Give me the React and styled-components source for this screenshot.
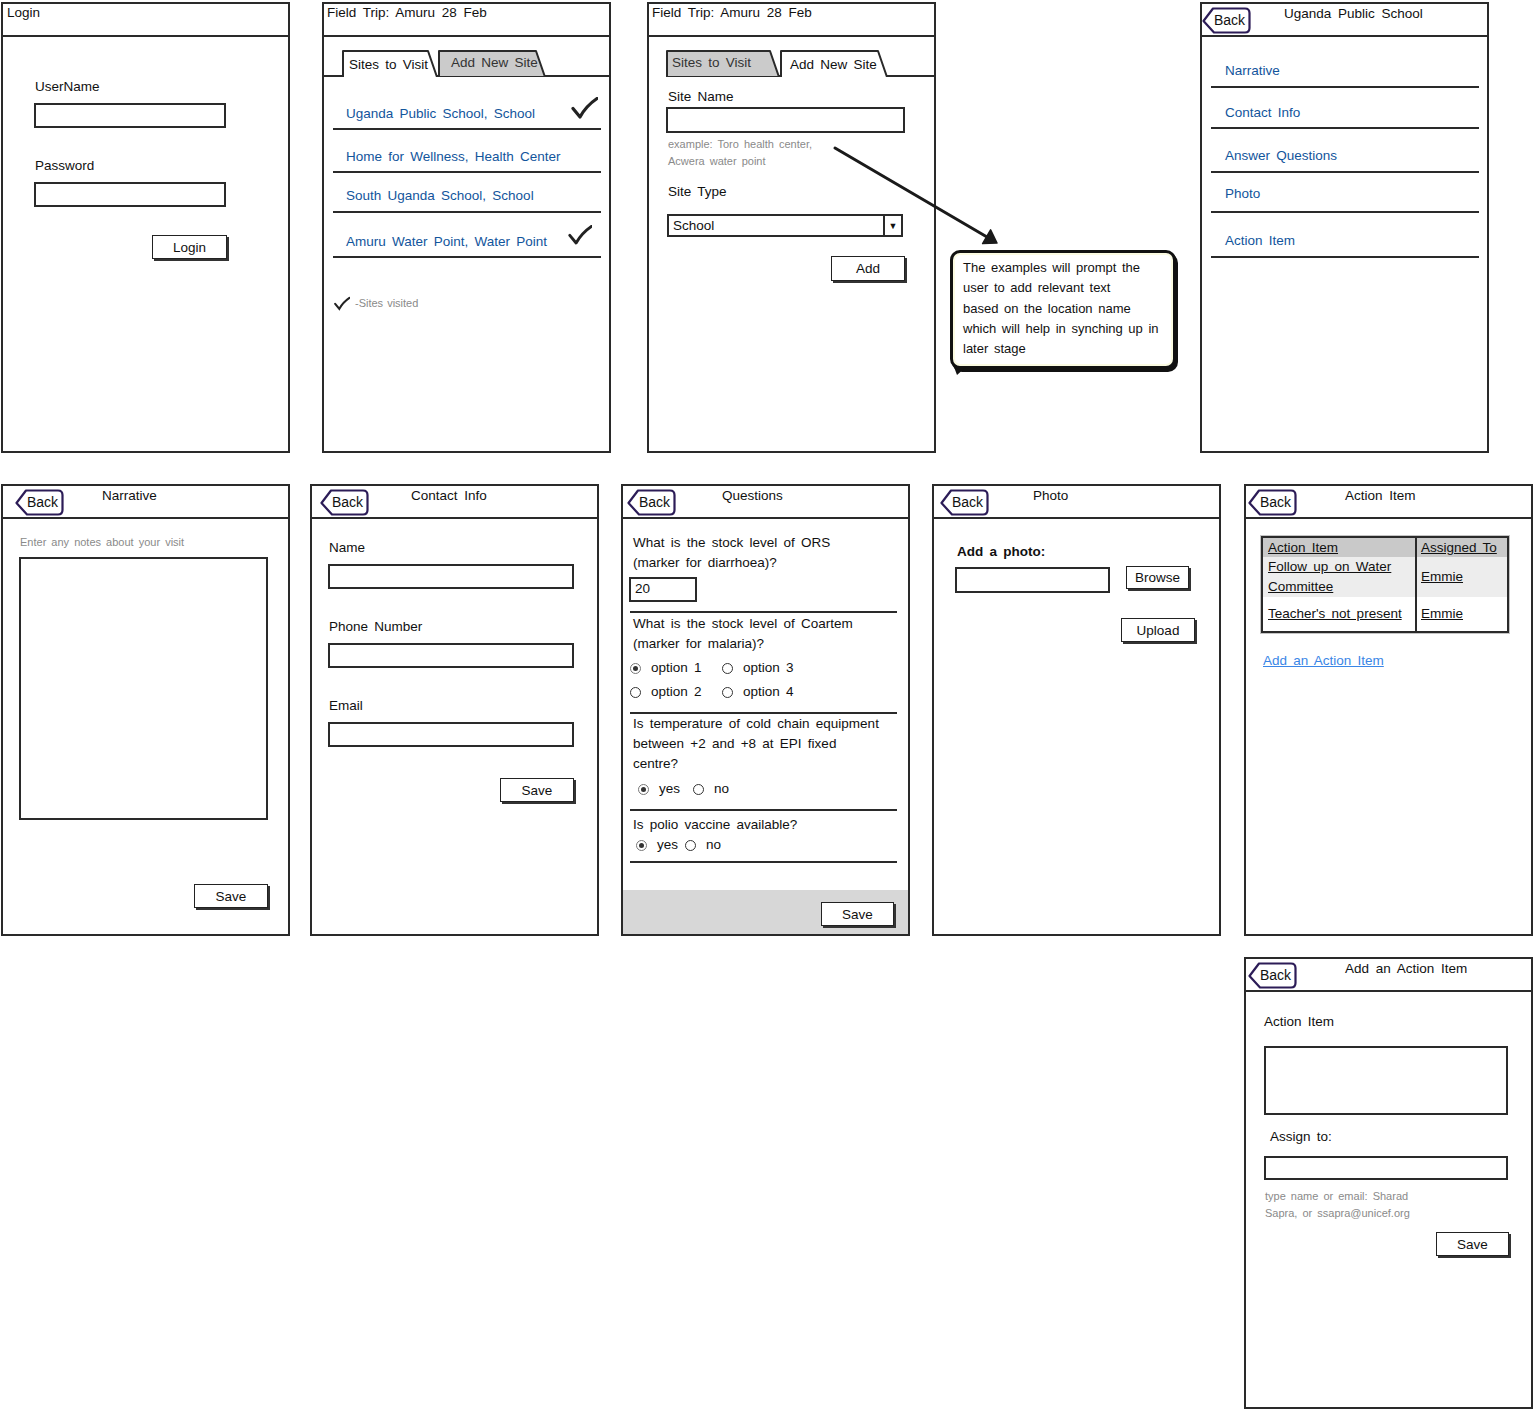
import React from "react";
import styled, { createGlobalStyle } from "styled-components";

const INK = "#2a2a2a";
const BLUE = "#12559c";
const HINT = "#8a8a8a";
const FS = "13.5px";

const GlobalStyle = createGlobalStyle`
  html, body { margin: 0; padding: 0; background: #fff; }
  body { font-family: "Liberation Sans", Arial, sans-serif; color: #111; }
  *, *::before, *::after { box-sizing: border-box; }
`;

const Canvas = styled.main`
  position: relative;
  width: 1534px;
  height: 1410px;
  overflow: hidden;
  background: #fff;
  font-size: ${FS};
  line-height: 16px;
  word-spacing: 2.5px;
`;

/* ---------- screen frame ---------- */
const Screen = styled.section`
  position: absolute;
  left: ${(p) => p.$x}px;
  top: ${(p) => p.$y}px;
  width: 289px;
  height: ${(p) => p.$h || 451}px;
  border: 2px solid ${INK};
  background: #fff;
  display: flex;
  flex-direction: column;
`;

const Header = styled.header`
  flex: none;
  height: 33px;
  border-bottom: 2px solid ${INK};
  display: flex;
  align-items: flex-start;
`;

const Title = styled.h1`
  margin: 0;
  font-size: ${FS};
  font-weight: normal;
  line-height: 16px;
  padding-top: ${(p) => p.$top ?? 1}px;
  padding-left: ${(p) => p.$left ?? 0}px;
  white-space: nowrap;
  word-spacing: 3px;
`;

const BackSlot = styled.div`
  flex: none;
  width: ${(p) => p.$w}px;
  padding: 3px 0 0 ${(p) => p.$ml}px;
`;

const BackBox = styled.span`
  position: relative;
  display: block;
  width: 49px;
  height: 27px;
`;

const BackSvg = styled.svg`
  position: absolute;
  left: 0;
  top: 0;
`;

const BackLabel = styled.span`
  position: relative;
  display: block;
  padding-left: 12px;
  line-height: 27px;
  font-size: 14px;
  color: #111;
`;

function BackButton() {
  return (
    <BackBox>
      <BackSvg width="49" height="27" viewBox="0 0 49 27" aria-hidden="true">
        <path
          d="M11 1.5 L43 1.5 Q47.5 1.5 47.5 6 L47.5 21 Q47.5 25.5 43 25.5 L12 25.5 L1.5 14 Z"
          fill="#fff"
          stroke="#2c1c57"
          strokeWidth="2.2"
          strokeLinejoin="round"
        />
      </BackSvg>
      <BackLabel>Back</BackLabel>
    </BackBox>
  );
}

function NavHeader({ title, backMl, slot = 99 }) {
  return (
    <Header>
      <BackSlot $w={slot} $ml={backMl}>
        <BackButton />
      </BackSlot>
      <Title $top={2}>{title}</Title>
    </Header>
  );
}

const Body = styled.div`
  flex: 1;
  display: flex;
  flex-direction: column;
  align-items: flex-start;
  padding: ${(p) => p.$pad || "0"};
  min-height: 0;
`;

/* ---------- form parts ---------- */
const Label = styled.div`
  font-size: ${FS};
  line-height: 16px;
  margin-top: ${(p) => p.$mt || 0}px;
  margin-left: ${(p) => p.$ml || 0}px;
  font-weight: ${(p) => (p.$bold ? "bold" : "normal")};
  white-space: nowrap;
`;

const Hint = styled.div`
  font-size: 11px;
  line-height: ${(p) => p.$lh || 17}px;
  color: ${HINT};
  word-spacing: 2px;
  margin-top: ${(p) => p.$mt || 0}px;
  margin-left: ${(p) => p.$ml || 0}px;
  white-space: nowrap;
`;

const Field = styled.div`
  flex: none;
  width: ${(p) => p.$w}px;
  height: ${(p) => p.$h || 25}px;
  margin-top: ${(p) => p.$mt || 0}px;
  margin-left: ${(p) => p.$ml || 0}px;
  border: 2px solid ${INK};
  background: #fff;
  padding: 2px 0 0 4px;
  font-size: ${FS};
`;

const ButtonRow = styled.div`
  display: flex;
  justify-content: flex-end;
  width: ${(p) => p.$w}px;
  margin-top: ${(p) => p.$mt || 0}px;
`;

const Button = styled.button`
  width: ${(p) => p.$w || 74}px;
  height: ${(p) => p.$h || 24}px;
  margin: 0;
  padding: 0;
  border: 1.5px solid #222;
  box-shadow: 2px 2px 0 #333;
  background: #fff;
  font-family: inherit;
  font-size: ${FS};
  color: #111;
  word-spacing: 3px;
`;

const Select = styled.div`
  display: flex;
  width: ${(p) => p.$w}px;
  height: 23px;
  margin-top: ${(p) => p.$mt || 0}px;
  margin-left: ${(p) => p.$ml || 0}px;
  border: 2px solid ${INK};
`;

const SelectValue = styled.span`
  flex: 1;
  padding: 2px 0 0 4px;
`;

const SelectArrow = styled.span`
  flex: none;
  width: 18px;
  border-left: 2px solid ${INK};
  display: flex;
  align-items: center;
  justify-content: center;
  font-size: 9px;
`;

/* ---------- tabs ---------- */
const TabStrip = styled.div`
  align-self: stretch;
  flex: none;
  height: 40px;
  border-bottom: 2px solid ${INK};
  display: flex;
  align-items: flex-end;
  padding-left: ${(p) => p.$pl}px;
`;

const TabBox = styled.div`
  position: relative;
  width: ${(p) => p.$w}px;
  height: 27px;
  margin-bottom: -2px;
  z-index: ${(p) => (p.$active ? 2 : 1)};
  color: ${(p) => (p.$active ? "#111" : "#333")};
`;

const TabSvg = styled.svg`
  position: absolute;
  left: 0;
  top: 0;
`;

const TabLabel = styled.span`
  position: relative;
  display: block;
  padding: ${(p) => (p.$active ? 7 : 5)}px 0 0 ${(p) => p.$pad}px;
  font-size: ${FS};
  white-space: nowrap;
`;

function Tab({ w, active, pad, children }) {
  const h = 27;
  const d = `M1 ${h} L1 1 L${w - 10} 1 L${w - 1} ${h}`;
  return (
    <TabBox $w={w} $active={active}>
      <TabSvg width={w} height={h} aria-hidden="true">
        <path
          d={active ? d : d + " Z"}
          fill={active ? "#fff" : "#cbcbcb"}
          stroke={INK}
          strokeWidth="2"
          strokeLinejoin="round"
        />
      </TabSvg>
      <TabLabel $pad={pad} $active={active}>
        {children}
      </TabLabel>
    </TabBox>
  );
}

/* ---------- lists ---------- */
const List = styled.div`
  align-self: stretch;
  margin: ${(p) => p.$mt || 0}px 8px 0 9px;
  display: flex;
  flex-direction: column;
`;

const ListRow = styled.div`
  height: ${(p) => p.$h}px;
  border-bottom: 2px solid ${INK};
  display: flex;
  align-items: flex-end;
  padding: 0 0 ${(p) => p.$pb ?? 8}px ${(p) => p.$pl || 13}px;
  color: ${BLUE};
  white-space: nowrap;
`;

const CheckSvg = styled.svg`
  flex: none;
  margin-left: auto;
  margin-right: ${(p) => p.$mr || 0}px;
  margin-bottom: ${(p) => p.$mb || 0}px;
`;

function Check({ mr, mb, size = 1 }) {
  return (
    <CheckSvg
      $mr={mr}
      $mb={mb}
      width={27 * size}
      height={22 * size}
      viewBox="0 0 27 22"
      aria-hidden="true"
    >
      <path
        d="M2 11.5 L9 20 Q15 9 26 1.5"
        fill="none"
        stroke="#222"
        strokeWidth="3.2"
        strokeLinecap="round"
        strokeLinejoin="round"
      />
    </CheckSvg>
  );
}

const Legend = styled.div`
  display: flex;
  align-items: center;
  margin-top: ${(p) => p.$mt}px;
  margin-left: 1px;
`;

const LegendSvg = styled.svg`
  flex: none;
`;

const LegendText = styled.span`
  font-size: 11px;
  color: ${HINT};
  margin-left: 5px;
  word-spacing: 1px;
`;

/* ---------- questions ---------- */
const QList = styled.div`
  align-self: stretch;
  margin: 0 11px 0 7px;
  display: flex;
  flex-direction: column;
`;

const QBlock = styled.div`
  border-bottom: 2px solid ${INK};
  padding: ${(p) => p.$pt || 0}px 0 ${(p) => p.$pb || 0}px 0;
  display: flex;
  flex-direction: column;
  align-items: flex-start;
`;

const QText = styled.p`
  margin: 0;
  padding-left: 3px;
  line-height: 20px;
  font-size: ${FS};
  white-space: nowrap;
`;

const RadioGrid = styled.div`
  display: grid;
  grid-template-columns: 92px auto;
  grid-auto-rows: 24px;
  margin-top: ${(p) => p.$mt || 0}px;
`;

const RadioRow = styled.div`
  display: flex;
  align-items: center;
  height: ${(p) => p.$h || 24}px;
  padding-left: ${(p) => p.$pl || 0}px;
  gap: ${(p) => p.$gap}px;
  margin-top: ${(p) => p.$mt || 0}px;
`;

const RadioItem = styled.span`
  display: inline-flex;
  align-items: center;
  gap: ${(p) => p.$gap || 10}px;
`;

const RadioCircle = styled.span`
  flex: none;
  width: 11px;
  height: 11px;
  border-radius: 50%;
  border: 1.6px solid ${(p) => (p.$on ? "#777" : "#333")};
  display: flex;
  align-items: center;
  justify-content: center;
  &::after {
    content: "";
    display: ${(p) => (p.$on ? "block" : "none")};
    width: 5px;
    height: 5px;
    border-radius: 50%;
    background: #333;
  }
`;

function Radio({ on, gap, children }) {
  return (
    <RadioItem $gap={gap}>
      <RadioCircle $on={on} />
      <span>{children}</span>
    </RadioItem>
  );
}

const Footer = styled.div`
  align-self: stretch;
  margin-top: auto;
  height: 44px;
  background: #d7d7d7;
  display: flex;
  justify-content: flex-end;
  align-items: flex-start;
  padding: 12px 14px 0 0;
`;

/* ---------- photo ---------- */
const InlineRow = styled.div`
  display: flex;
  align-items: flex-start;
  gap: ${(p) => p.$gap}px;
  margin-top: ${(p) => p.$mt || 0}px;
`;

const Nudge = styled.div`
  margin-top: ${(p) => p.$mt || 0}px;
`;

/* ---------- table ---------- */
const TableFrame = styled.div`
  margin-top: ${(p) => p.$mt}px;
  margin-left: ${(p) => p.$ml}px;
  width: 250px;
  border: 1px solid #c4c4c4;
`;

const Table = styled.table`
  width: 100%;
  border-collapse: collapse;
  border: 2px solid ${INK};
  font-size: ${FS};
`;

const Th = styled.th`
  background: #c9c9c9;
  height: 20px;
  text-align: left;
  font-weight: normal;
  padding: 0 0 0 ${(p) => p.$pl}px;
  text-decoration: underline;
  border-left: ${(p) => (p.$divider ? `2px solid ${INK}` : "none")};
  width: ${(p) => (p.$w ? `${p.$w}px` : "auto")};
  white-space: nowrap;
`;

const Td = styled.td`
  background: ${(p) => p.$bg || "#fff"};
  height: ${(p) => p.$h}px;
  padding: 0 0 0 ${(p) => p.$pl}px;
  line-height: 20px;
  text-decoration: underline;
  vertical-align: middle;
  border-left: ${(p) => (p.$divider ? `2px solid ${INK}` : "none")};
  white-space: nowrap;
`;

const Link = styled.a`
  display: block;
  margin-top: ${(p) => p.$mt}px;
  margin-left: ${(p) => p.$ml}px;
  color: #3a86e6;
  text-decoration: underline;
  font-size: ${FS};
`;

/* ---------- annotation ---------- */
const Callout = styled.aside`
  position: absolute;
  left: 950px;
  top: 250px;
  width: 226px;
  height: 119px;
  border: 3px solid #111;
  border-radius: 10px;
  box-shadow: inset 0 0 0 2px #fbfbe2, 2px 3px 0 #111;
  background: #fff;
  padding: 5px 6px 0 10px;
  font-size: 13px;
  line-height: 20.3px;
  word-spacing: 2px;
  white-space: nowrap;
  &::after {
    content: "";
    position: absolute;
    left: 1px;
    bottom: -9px;
    width: 0;
    height: 0;
    border-left: 3px solid transparent;
    border-right: 9px solid transparent;
    border-top: 8px solid #111;
  }
`;

const ArrowSvg = styled.svg`
  position: absolute;
  left: 830px;
  top: 140px;
  overflow: visible;
`;

export default function App() {
  return (
    <>
      <GlobalStyle />
      <Canvas>
        {/* Login */}
        <Screen $x={1} $y={2}>
          <Header>
            <Title $left={4}>Login</Title>
          </Header>
          <Body $pad="42px 0 0 31px">
            <Label $ml={1}>UserName</Label>
            <Field $w={192} $mt={8} />
            <Label $ml={1} $mt={30}>
              Password
            </Label>
            <Field $w={192} $mt={8} />
            <ButtonRow $w={193} $mt={28}>
              <Button $w={75} $h={24}>
                Login
              </Button>
            </ButtonRow>
          </Body>
        </Screen>

        {/* Field trip - sites */}
        <Screen $x={322} $y={2}>
          <Header>
            <Title $left={3}>Field Trip: Amuru 28 Feb</Title>
          </Header>
          <Body>
            <TabStrip $pl={18}>
              <Tab w={96} active pad={7}>
                Sites to Visit
              </Tab>
              <Tab w={108} pad={13}>
                Add New Site
              </Tab>
            </TabStrip>
            <List $mt={1}>
              <ListRow $h={52} $pb={6}>
                Uganda Public School, School
                <Check mr={3} mb={3} />
              </ListRow>
              <ListRow $h={43} $pb={6}>Home for Wellness, Health Center</ListRow>
              <ListRow $h={40} $pb={7}>South Uganda School, School</ListRow>
              <ListRow $h={45} $pb={6}>
                Amuru Water Point, Water Point
                <Check mr={9} mb={5} size={0.9} />
              </ListRow>
              <Legend $mt={37}>
                <LegendSvg width="16" height="15" viewBox="0 0 27 22" aria-hidden="true">
                  <path
                    d="M2 11.5 L9 20 Q15 9 26 1.5"
                    fill="none"
                    stroke="#222"
                    strokeWidth="3.5"
                    strokeLinecap="round"
                  />
                </LegendSvg>
                <LegendText>-Sites visited</LegendText>
              </Legend>
            </List>
          </Body>
        </Screen>

        {/* Field trip - add site */}
        <Screen $x={647} $y={2}>
          <Header>
            <Title $left={3}>Field Trip: Amuru 28 Feb</Title>
          </Header>
          <Body $pad="0 0 0 17px">
            <TabStrip $pl={0}>
              <Tab w={114} pad={6}>
                Sites to Visit
              </Tab>
              <Tab w={108} active pad={10}>
                Add New Site
              </Tab>
            </TabStrip>
            <Label $ml={2} $mt={12}>
              Site Name
            </Label>
            <Field $w={239} $h={26} $mt={2} />
            <Hint $mt={3} $ml={2}>
              example: Toro health center,
              <br />
              Acwera water point
            </Hint>
            <Label $ml={2} $mt={14}>
              Site Type
            </Label>
            <Select $w={236} $mt={14} $ml={1}>
              <SelectValue>School</SelectValue>
              <SelectArrow>▼</SelectArrow>
            </Select>
            <ButtonRow $w={239} $mt={19}>
              <Button $w={74} $h={25}>
                Add
              </Button>
            </ButtonRow>
          </Body>
        </Screen>

        {/* Arrow + callout */}
        <ArrowSvg width="175" height="110" aria-hidden="true">
          <line x1="5" y1="8" x2="157" y2="97" stroke="#1a1a1a" strokeWidth="3" strokeLinecap="round" />
          <polygon points="167,103 152.6,103.6 160.6,89.8" fill="#1a1a1a" stroke="#1a1a1a" strokeWidth="1.5" strokeLinejoin="round" />
        </ArrowSvg>
        <Callout>
          The examples will prompt the
          <br />
          user to add relevant text
          <br />
          based on the location name
          <br />
          which will help in synching up in
          <br />
          later stage
        </Callout>

        {/* Site menu */}
        <Screen $x={1200} $y={2}>
          <NavHeader title="Uganda Public School" backMl={0} slot={82} />
          <Body>
            <List>
              <ListRow $h={51} $pl={14} $pb={7}>Narrative</ListRow>
              <ListRow $h={41} $pl={14} $pb={6}>Contact Info</ListRow>
              <ListRow $h={44} $pl={14} $pb={7}>Answer Questions</ListRow>
              <ListRow $h={40} $pl={14} $pb={9}>Photo</ListRow>
              <ListRow $h={45} $pl={14} $pb={7}>Action Item</ListRow>
            </List>
          </Body>
        </Screen>

        {/* Narrative */}
        <Screen $x={1} $y={484} $h={452}>
          <NavHeader title="Narrative" backMl={12} />
          <Body $pad="16px 0 0 16px">
            <Hint $lh={14} $ml={1}>
              Enter any notes about your visit
            </Hint>
            <Field $w={249} $h={263} $mt={8} />
            <ButtonRow $w={249} $mt={64}>
              <Button $w={74} $h={24}>
                Save
              </Button>
            </ButtonRow>
          </Body>
        </Screen>

        {/* Contact info */}
        <Screen $x={310} $y={484} $h={452}>
          <NavHeader title="Contact Info" backMl={8} />
          <Body $pad="21px 0 0 16px">
            <Label $ml={1}>Name</Label>
            <Field $w={246} $mt={8} />
            <Label $ml={1} $mt={30}>
              Phone Number
            </Label>
            <Field $w={246} $mt={8} />
            <Label $ml={1} $mt={30}>
              Email
            </Label>
            <Field $w={246} $mt={8} />
            <ButtonRow $w={246} $mt={31}>
              <Button $w={74} $h={24}>
                Save
              </Button>
            </ButtonRow>
          </Body>
        </Screen>

        {/* Questions */}
        <Screen $x={621} $y={484} $h={452}>
          <NavHeader title="Questions" backMl={4} />
          <Body>
            <QList>
              <QBlock $pt={14} $pb={9}>
                <QText>
                  What is the stock level of ORS
                  <br />
                  (marker for diarrhoea)?
                </QText>
                <Field $w={68} $h={25} $mt={4} $ml={-1}>
                  20
                </Field>
              </QBlock>
              <QBlock $pt={1} $pb={8}>
                <QText>
                  What is the stock level of Coartem
                  <br />
                  (marker for malaria)?
                </QText>
                <RadioGrid $mt={2}>
                  <Radio on>option 1</Radio>
                  <Radio>option 3</Radio>
                  <Radio>option 2</Radio>
                  <Radio>option 4</Radio>
                </RadioGrid>
              </QBlock>
              <QBlock $pt={0} $pb={8}>
                <QText>
                  Is temperature of cold chain equipment
                  <br />
                  between +2 and +8 at EPI fixed
                  <br />
                  centre?
                </QText>
                <RadioRow $pl={8} $gap={13} $mt={3}>
                  <Radio on>yes</Radio>
                  <Radio>no</Radio>
                </RadioRow>
              </QBlock>
              <QBlock $pt={4} $pb={6}>
                <QText>Is polio vaccine available?</QText>
                <RadioRow $pl={6} $gap={7} $h={20}>
                  <Radio on>yes</Radio>
                  <Radio>no</Radio>
                </RadioRow>
              </QBlock>
            </QList>
            <Footer>
              <Button $w={73} $h={24}>
                Save
              </Button>
            </Footer>
          </Body>
        </Screen>

        {/* Photo */}
        <Screen $x={932} $y={484} $h={452}>
          <NavHeader title="Photo" backMl={6} />
          <Body $pad="25px 0 0 21px">
            <Label $ml={2} $bold>
              Add a photo:
            </Label>
            <InlineRow $gap={16} $mt={7}>
              <Field $w={155} $h={26} />
              <Nudge $mt={-1}>
                <Button $w={63} $h={23}>
                  Browse
                </Button>
              </Nudge>
            </InlineRow>
            <ButtonRow $w={240} $mt={25}>
              <Button $w={74} $h={24}>
                Upload
              </Button>
            </ButtonRow>
          </Body>
        </Screen>

        {/* Action items */}
        <Screen $x={1244} $y={484} $h={452}>
          <NavHeader title="Action Item" backMl={2} />
          <Body>
            <TableFrame $mt={16} $ml={14}>
              <Table>
                <thead>
                  <tr>
                    <Th $pl={5} $w={154}>
                      Action Item
                    </Th>
                    <Th $pl={4} $divider>
                      Assigned To
                    </Th>
                  </tr>
                </thead>
                <tbody>
                  <tr>
                    <Td $h={40} $pl={5} $bg="#ededed">
                      Follow up on Water
                      <br />
                      Committee
                    </Td>
                    <Td $h={40} $pl={4} $bg="#ededed" $divider>
                      Emmie
                    </Td>
                  </tr>
                  <tr>
                    <Td $h={35} $pl={5}>
                      Teacher's not present
                    </Td>
                    <Td $h={35} $pl={4} $divider>
                      Emmie
                    </Td>
                  </tr>
                </tbody>
              </Table>
            </TableFrame>
            <Link href="#" $mt={19} $ml={17}>
              Add an Action Item
            </Link>
          </Body>
        </Screen>

        {/* Add action item */}
        <Screen $x={1244} $y={957} $h={452}>
          <NavHeader title="Add an Action Item" backMl={2} />
          <Body $pad="22px 0 0 18px">
            <Label>Action Item</Label>
            <Field $w={244} $h={69} $mt={16} />
            <Label $ml={6} $mt={14}>
              Assign to:
            </Label>
            <Field $w={244} $h={24} $mt={11} />
            <Hint $mt={8} $ml={1}>
              type name or email: Sharad
              <br />
              Sapra, or ssapra@unicef.org
            </Hint>
            <ButtonRow $w={245} $mt={10}>
              <Button $w={73} $h={24}>
                Save
              </Button>
            </ButtonRow>
          </Body>
        </Screen>
      </Canvas>
    </>
  );
}
